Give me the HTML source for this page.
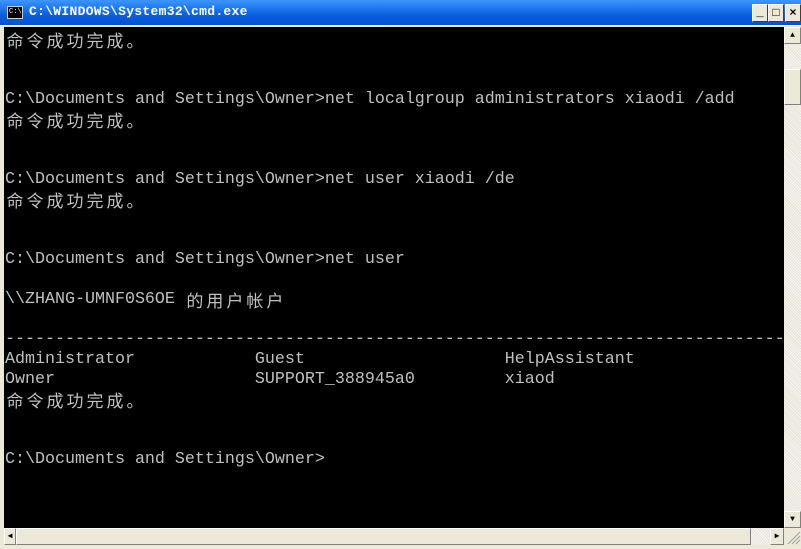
<!DOCTYPE html>
<html><head><meta charset="utf-8"><style>
*{margin:0;padding:0;box-sizing:border-box}
body{width:801px;height:549px;overflow:hidden;background:#ece9d8;position:relative;font-family:"Liberation Mono",monospace}
#title{position:absolute;left:0;top:0;width:801px;height:26px;background:linear-gradient(#3d95ff,#0a5fe0 60%,#0750d0);border-bottom:1px solid #fff}
#title .t{position:absolute;left:29px;top:4px;color:#fff;font-weight:bold;font-size:13px;letter-spacing:0.3px}
#icon{position:absolute;left:7px;top:6px;width:16px;height:13px;background:#000;border:1px solid #ccc;color:#fff;font-size:7px;line-height:11px;padding-left:1px}
.btn{position:absolute;top:4px;width:16px;height:18px;background:#ece9d8;border:1px solid;border-color:#fff #404040 #404040 #fff;font-size:12px;font-weight:bold;text-align:center;line-height:16px;color:#000}
#con{position:absolute;left:4px;top:27px;width:780px;height:501px;background:#000;overflow:hidden}
pre{position:absolute;left:1px;top:3px;color:#c0c0c0;font-family:"Liberation Mono",monospace;font-size:16.67px;line-height:20px}
.c{display:inline-block;width:20px;font-family:"Noto Sans CJK SC",sans-serif;font-size:17px;text-align:center;vertical-align:top}
.tr{background-color:#f6f4ee;background-image:repeating-linear-gradient(45deg,#e6e3d8 0 1px,transparent 1px 2px)}
#vs{position:absolute;left:784px;top:27px;width:17px;height:501px}
#hs{position:absolute;left:4px;top:528px;width:780px;height:17px}
.sb{position:absolute;background:#ece9d8;border:1px solid;border-color:#fff #808080 #808080 #fff;font-size:8px;text-align:center;line-height:15px}
</style></head><body>
<div id="title"><div id="icon">C:\</div><div class="t">C:\WINDOWS\System32\cmd.exe</div>
<div class="btn" style="left:752px">_</div><div class="btn" style="left:768px">□</div><div class="btn" style="left:785px">×</div></div>
<div id="con"><pre><span class="c">命</span><span class="c">令</span><span class="c">成</span><span class="c">功</span><span class="c">完</span><span class="c">成</span><span class="c">。</span>


C:\Documents and Settings\Owner>net localgroup administrators xiaodi /add
<span class="c">命</span><span class="c">令</span><span class="c">成</span><span class="c">功</span><span class="c">完</span><span class="c">成</span><span class="c">。</span>


C:\Documents and Settings\Owner>net user xiaodi /de
<span class="c">命</span><span class="c">令</span><span class="c">成</span><span class="c">功</span><span class="c">完</span><span class="c">成</span><span class="c">。</span>


C:\Documents and Settings\Owner>net user

\\ZHANG-UMNF0S6OE <span class="c">的</span><span class="c">用</span><span class="c">户</span><span class="c">帐</span><span class="c">户</span>

-------------------------------------------------------------------------------
Administrator            Guest                    HelpAssistant
Owner                    SUPPORT_388945a0         xiaod
<span class="c">命</span><span class="c">令</span><span class="c">成</span><span class="c">功</span><span class="c">完</span><span class="c">成</span><span class="c">。</span>


C:\Documents and Settings\Owner></pre></div>
<div id="vs" class="tr"><div class="sb" style="left:0;top:0;width:17px;height:17px">▲</div><div class="sb" style="left:0;top:42px;width:17px;height:36px"></div><div class="sb" style="left:0;top:484px;width:17px;height:17px">▼</div></div>
<div id="hs" class="tr"><div class="sb" style="left:0;top:0;width:12px;height:17px">◀</div><div class="sb" style="left:12px;top:0;width:735px;height:17px"></div><div class="sb" style="left:766px;top:0;width:14px;height:17px">▶</div></div>
<svg style="position:absolute;left:784px;top:528px" width="17" height="17"><path d="M16 4L4 16M16 8L8 16M16 12L12 16" stroke="#a0a0a0" stroke-width="1"/></svg>
</body></html>
